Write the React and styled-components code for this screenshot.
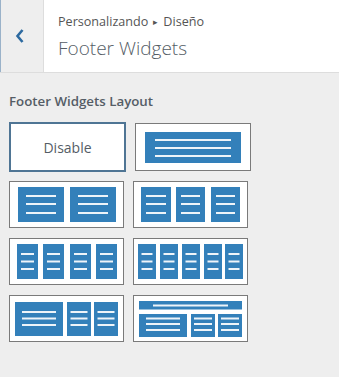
import React from "react";
import styled, { createGlobalStyle } from "styled-components";

const Global = createGlobalStyle`
  html, body { margin: 0; padding: 0; background: #eeeeee; }
  body { font-family: "Open Sans", "Noto Sans", sans-serif; }
`;

const Panel = styled.div`
  width: 339px;
  height: 377px;
  background: #eeeeee;
  overflow: hidden;
`;

const Header = styled.header`
  display: flex;
  height: 72px;
  background: #fff;
  border-bottom: 1px solid #dddddd;
`;

const BackButton = styled.button`
  width: 44px;
  flex: 0 0 44px;
  display: flex;
  align-items: center;
  justify-content: center;
  padding: 0 4px 0 0;
  margin: 0;
  background: #eeeeee;
  border: none;
  border-left: 1px solid #9ab2c9;
  border-right: 1px solid #dddddd;
  color: #2d6aa0;
  cursor: pointer;
`;

const Titles = styled.div`
  display: flex;
  flex-direction: column;
  padding: 12px 0 0 14px;
  color: #555d66;
`;

const Crumb = styled.span`
  font-size: 12.6px;
  line-height: 20px;
  color: #555555;
`;

const Sep = styled.span`
  display: inline-block;
  font-size: 9px;
  margin: 0 5px 0 5px;
  vertical-align: 1px;
`;

const Title = styled.h1`
  margin: 3px 0 0;
  font-size: 19px;
  font-weight: 300;
  line-height: 26px;
  color: #555d66;
`;

const Body = styled.section`
  padding: 18px 9px 0;
`;

const Label = styled.div`
  font-size: 13.3px;
  font-weight: 600;
  color: #555d66;
  line-height: 20px;
  margin-bottom: 11px;
`;

const FirstRow = styled.div`
  display: flex;
  align-items: center;
  gap: 9px;
  margin-bottom: 9px;
`;

const Grid = styled.div`
  display: grid;
  grid-template-columns: 115px 115px;
  column-gap: 9px;
  row-gap: 10px;
`;

const Option = styled.div`
  box-sizing: border-box;
  width: ${(p) => p.$w || 115}px;
  height: ${(p) => p.$h || 47}px;
  background: #fff;
  border: ${(p) => (p.$selected ? "2px solid #4f7594" : "1px solid #7a7a7a")};
  display: flex;
  align-items: center;
  justify-content: center;
  font-size: 14px;
  color: #555d66;
`;

const BLUE = "#3380ba";
const LINE = "#eef4f9";

function Col({ x, y = 0, w, h, inset, lines }) {
  return (
    <g>
      <rect x={x} y={y} width={w} height={h} fill={BLUE} />
      {lines.map((ly) => (
        <rect key={ly} x={x + inset} y={y + ly - 1} width={w - inset * 2} height={2} fill={LINE} />
      ))}
    </g>
  );
}

function Icon({ w, h, children }) {
  return (
    <svg width={w} height={h} viewBox={`0 0 ${w} ${h}`}>
      {children}
    </svg>
  );
}

const L35 = [9, 17, 26];
const L35b = [10, 17.5, 25];

export default function App() {
  return (
    <Panel>
      <Global />
      <Header>
        <BackButton aria-label="Volver">
          <svg width="10" height="16" viewBox="0 0 10 16">
            <path d="M7.5 2 L2.5 8 L7.5 14" fill="none" stroke="currentColor" strokeWidth="2.6" />
          </svg>
        </BackButton>
        <Titles>
          <Crumb>
            Personalizando<Sep>▸</Sep>Diseño
          </Crumb>
          <Title>Footer Widgets</Title>
        </Titles>
      </Header>
      <Body>
        <Label>Footer Widgets Layout</Label>
        <FirstRow>
          <Option $selected $w={117} $h={50}>Disable</Option>
          <Option $w={116} $h={48}>
            <Icon w={96} h={31}>
              <Col x={0} w={96} h={31} inset={10} lines={[8, 16, 24]} />
            </Icon>
          </Option>
        </FirstRow>
        <Grid>
          <Option>
            <Icon w={98} h={35}>
              <Col x={0} w={46} h={35} inset={8} lines={L35} />
              <Col x={52} w={46} h={35} inset={8} lines={L35} />
            </Icon>
          </Option>
          <Option>
            <Icon w={99} h={35}>
              <Col x={0} w={30} h={35} inset={5} lines={L35} />
              <Col x={35} w={29} h={35} inset={5} lines={L35} />
              <Col x={70} w={29} h={35} inset={5} lines={L35} />
            </Icon>
          </Option>
          <Option>
            <Icon w={100} h={35}>
              <Col x={0} w={21} h={35} inset={4} lines={L35b} />
              <Col x={26} w={21} h={35} inset={4} lines={L35b} />
              <Col x={53} w={21} h={35} inset={4} lines={L35b} />
              <Col x={79} w={21} h={35} inset={4} lines={L35b} />
            </Icon>
          </Option>
          <Option>
            <Icon w={105} h={35}>
              <Col x={0} w={18} h={35} inset={3.5} lines={L35b} />
              <Col x={22} w={18} h={35} inset={3.5} lines={L35b} />
              <Col x={44} w={18} h={35} inset={3.5} lines={L35b} />
              <Col x={66} w={18} h={35} inset={3.5} lines={L35b} />
              <Col x={87} w={18} h={35} inset={3.5} lines={L35b} />
            </Icon>
          </Option>
          <Option>
            <Icon w={103} h={34}>
              <Col x={0} w={48} h={34} inset={7} lines={[10, 16.5, 23]} />
              <Col x={52} w={24} h={34} inset={3.5} lines={[10, 16.5, 23]} />
              <Col x={79} w={24} h={34} inset={3.5} lines={[10, 16.5, 23]} />
            </Icon>
          </Option>
          <Option>
            <Icon w={103} h={36}>
              <Col x={0} w={103} h={8.5} inset={14} lines={[4.5]} />
              <Col x={0} y={13} w={48} h={23} inset={7} lines={[4.5, 10, 16]} />
              <Col x={52} y={13} w={24} h={23} inset={3} lines={[4.5, 10, 16]} />
              <Col x={79} y={13} w={24} h={23} inset={3} lines={[4.5, 10, 16]} />
            </Icon>
          </Option>
        </Grid>
      </Body>
    </Panel>
  );
}
